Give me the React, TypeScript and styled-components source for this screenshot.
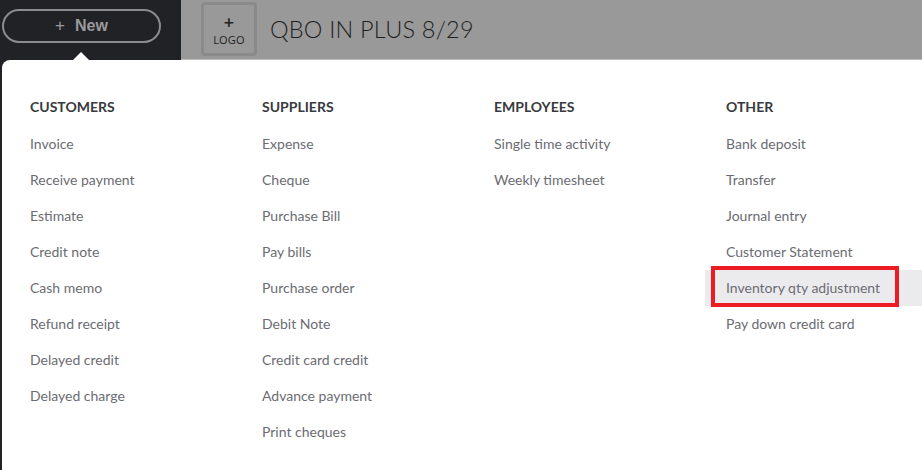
import React from "react";
import styled, { createGlobalStyle } from "styled-components";

const Global = createGlobalStyle`
  html, body { margin: 0; padding: 0; }
  body { font-family: Lato, "Open Sans", sans-serif; background: #ffffff; }
  * { box-sizing: border-box; }
`;

const Page = styled.div`
  position: relative;
  width: 922px;
  height: 470px;
  display: grid;
  grid-template-columns: 181px 1fr;
  overflow: hidden;
`;

const Sidebar = styled.div`
  background: #212226;
  height: 100%;
  padding: 9px 0 0 2px;
`;

const NewButton = styled.div`
  width: 159px;
  height: 34px;
  border: 2px solid #8c8c8e;
  border-radius: 17px;
  display: flex;
  align-items: center;
  justify-content: center;
  gap: 10px;
  color: #9a9a9c;
  font-family: "Liberation Sans", Arial, sans-serif;
  font-weight: 700;
  font-size: 16px;
`;

const Plus = styled.span`
  font-weight: 400;
  font-size: 17px;
`;

const Main = styled.div`
  background: #ffffff;
`;

const Header = styled.div`
  height: 60px;
  background: #999999;
  border-bottom: 1px solid #bdbdbd;
  display: flex;
  align-items: flex-start;
  padding: 2px 0 0 20px;
  gap: 13px;
`;

const LogoBox = styled.div`
  width: 56px;
  height: 54px;
  border: 3px solid #8a8a8a;
  border-radius: 4px;
  display: flex;
  flex-direction: column;
  align-items: center;
  justify-content: center;
  color: #222;
  font-family: "Open Sans", sans-serif;
  line-height: 1;
`;

const LogoPlus = styled.span`
  font-size: 18px;
  font-weight: 600;
  margin-bottom: 3px;
`;

const LogoText = styled.span`
  font-size: 11px;
  letter-spacing: 0.2px;
`;

const Title = styled.div`
  margin-top: 13px;
  font-family: Lato, sans-serif;
  font-weight: 300;
  font-size: 23.5px;
  color: #1f1f1f;
  letter-spacing: 0.2px;
`;

const Panel = styled.div`
  position: absolute;
  left: 2px;
  top: 60px;
  right: 0;
  bottom: 0;
  background: #ffffff;
  border-top-left-radius: 8px;
  display: grid;
  grid-template-columns: repeat(4, 232px);
  padding: 38px 0 0 0;
`;

const Caret = styled.div`
  position: absolute;
  left: 71px;
  top: -8px;
  width: 0;
  height: 0;
  border-left: 8px solid transparent;
  border-right: 8px solid transparent;
  border-bottom: 8px solid #ffffff;
`;

const Column = styled.div`
  display: flex;
  flex-direction: column;
`;

const Heading = styled.div`
  height: 18px;
  line-height: 18px;
  padding-left: 28px;
  font-size: 14px;
  font-weight: 700;
  color: #393a3d;
  margin-bottom: 10px;
`;

const Item = styled.div<{ $active?: boolean }>`
  position: relative;
  height: 36px;
  line-height: 36px;
  font-size: 14px;
  color: #6b6c72;
  background: ${(p) => (p.$active ? "#ebebee" : "transparent")};
  margin-left: ${(p) => (p.$active ? "7px" : "0")};
  padding-left: ${(p) => (p.$active ? "21px" : "28px")};
`;

const Highlight = styled.div`
  position: absolute;
  left: 6px;
  top: -4px;
  width: 188px;
  height: 41px;
  border: 4px solid #ec1c24;
  pointer-events: none;
`;

type Col = { title: string; items: string[] };

const columns: Col[] = [
  {
    title: "CUSTOMERS",
    items: [
      "Invoice",
      "Receive payment",
      "Estimate",
      "Credit note",
      "Cash memo",
      "Refund receipt",
      "Delayed credit",
      "Delayed charge",
    ],
  },
  {
    title: "SUPPLIERS",
    items: [
      "Expense",
      "Cheque",
      "Purchase Bill",
      "Pay bills",
      "Purchase order",
      "Debit Note",
      "Credit card credit",
      "Advance payment",
      "Print cheques",
    ],
  },
  {
    title: "EMPLOYEES",
    items: ["Single time activity", "Weekly timesheet"],
  },
  {
    title: "OTHER",
    items: [
      "Bank deposit",
      "Transfer",
      "Journal entry",
      "Customer Statement",
      "Inventory qty adjustment",
      "Pay down credit card",
    ],
  },
];

export default function App() {
  return (
    <>
      <Global />
      <Page>
        <Sidebar>
          <NewButton>
            <Plus>+</Plus>
            <span>New</span>
          </NewButton>
        </Sidebar>
        <Main>
          <Header>
            <LogoBox>
              <LogoPlus>+</LogoPlus>
              <LogoText>LOGO</LogoText>
            </LogoBox>
            <Title>QBO IN PLUS 8/29</Title>
          </Header>
        </Main>
        <Panel>
          <Caret />
          {columns.map((c) => (
            <Column key={c.title}>
              <Heading>{c.title}</Heading>
              {c.items.map((it) => {
                const active = it === "Inventory qty adjustment";
                return (
                  <Item key={it} $active={active}>
                    {it}
                    {active && <Highlight />}
                  </Item>
                );
              })}
            </Column>
          ))}
        </Panel>
      </Page>
    </>
  );
}
